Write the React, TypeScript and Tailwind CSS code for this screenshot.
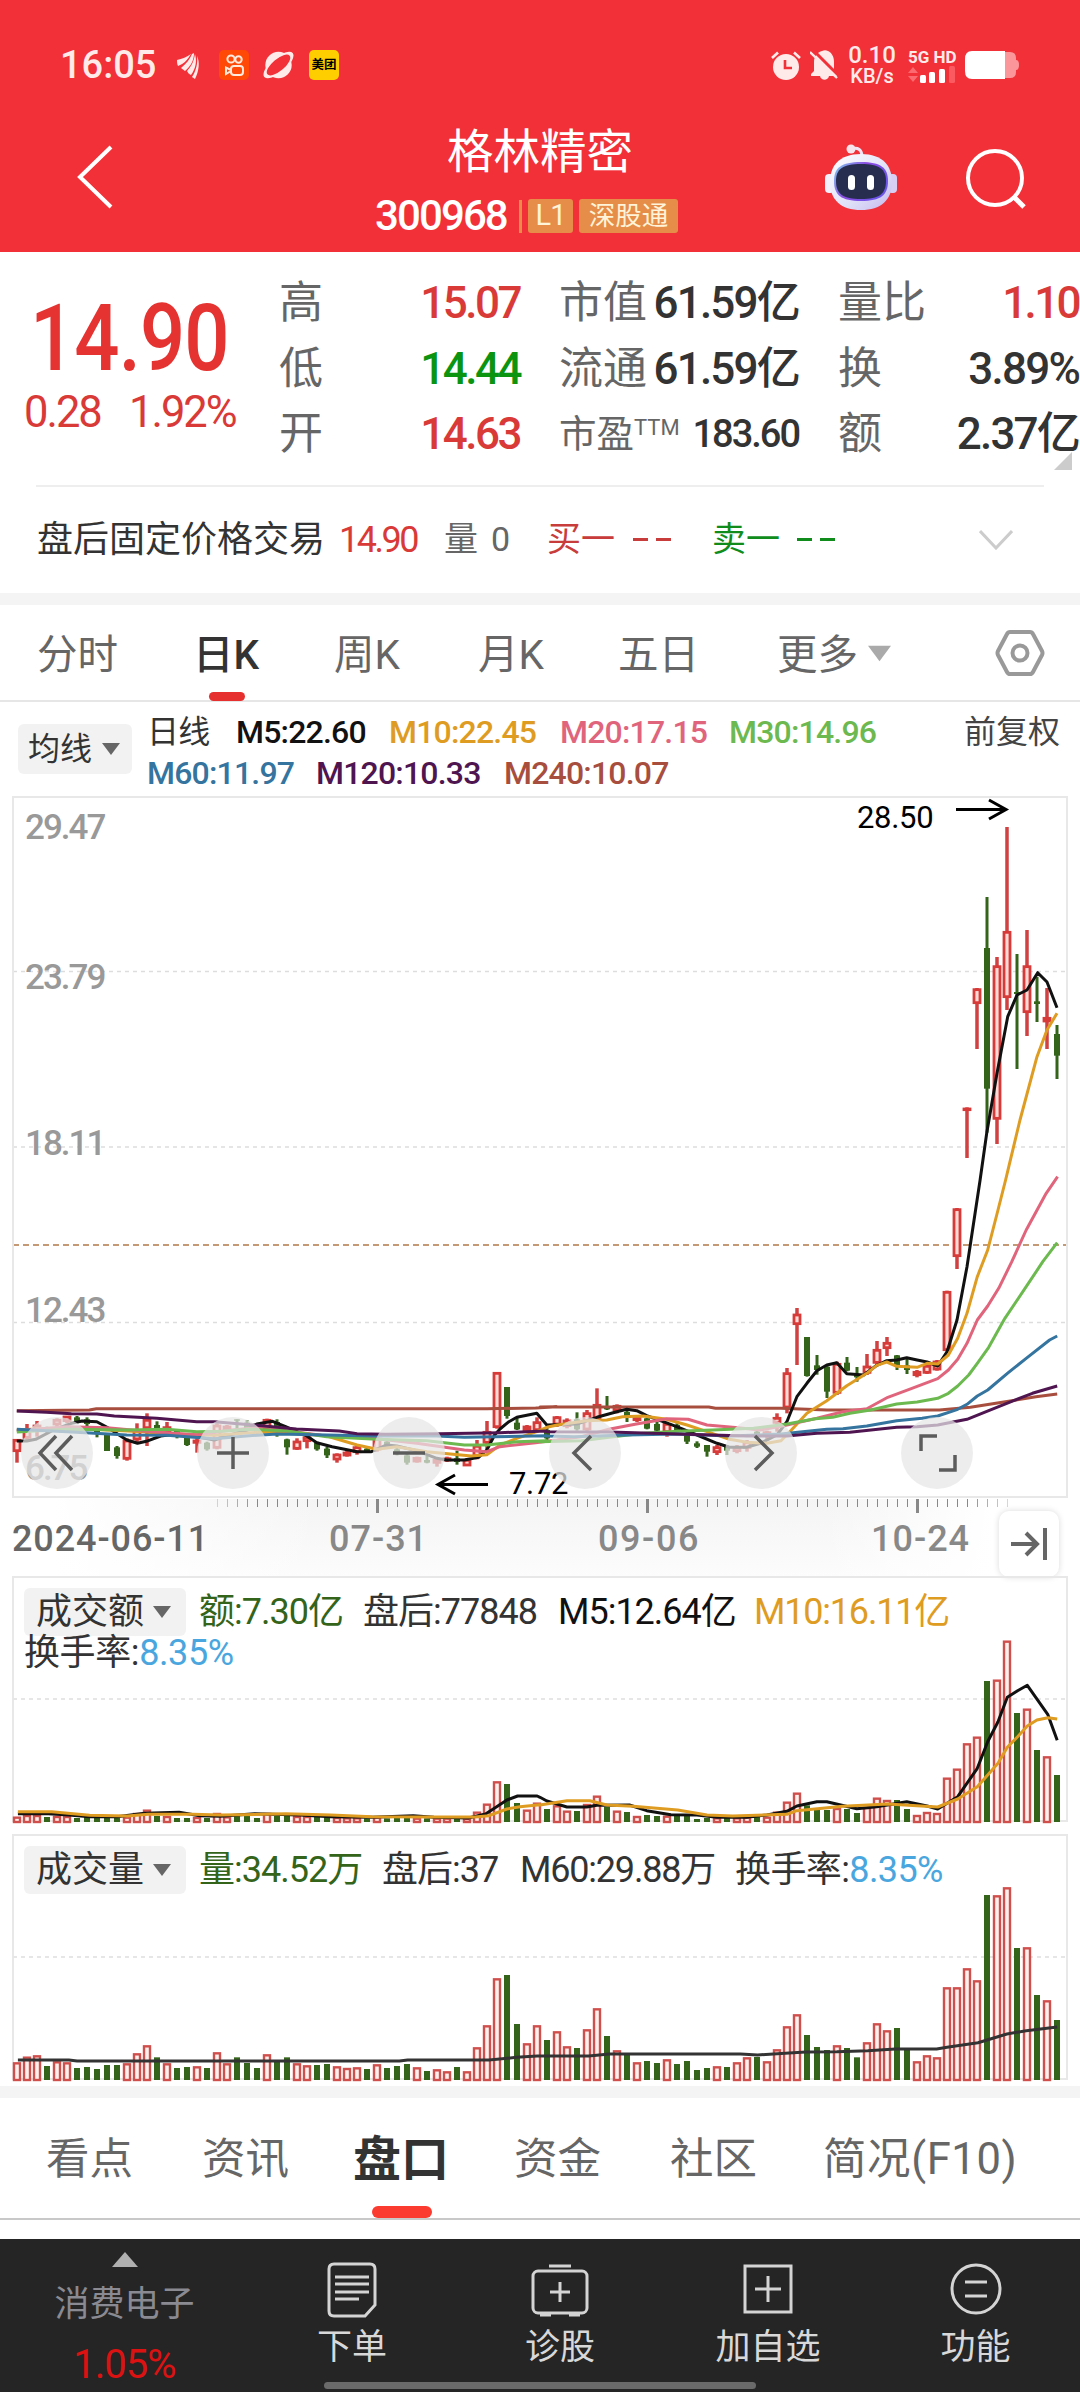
import React from "react";

type Section = { x: number; y: number; k: number };

// The curves are kept in sections of the plot, each with its own origin and scale
const LEFT: Section = { x: 0, y: 1330, k: 2.8 };
const RIGHT: Section = { x: 540, y: 1180, k: 2.904 };
const PEAK: Section = { x: 820, y: 780, k: 3 };
const TURN_L: Section = { x: 0, y: 1570, k: 2.904 };
const TURN_R: Section = { x: 540, y: 1570, k: 2.904 };
const VOL: Section = { x: 0, y: 1830, k: 1.452 };

const trace = (...parts: [Section, string][]) =>
  parts
    .flatMap(([s, pts]) =>
      pts.split(" ").map((p) => {
        const [x, y] = p.split(",").map(Number);
        return `${(s.x + x / s.k).toFixed(1)},${(s.y + y / 3).toFixed(1)}`;
      })
    )
    .join(" ");

const kLines = [
  {
    color: "#a84e3e",
    points: trace(
      [LEFT, "47,242 250,240 270,236 1363,236 1500,234 1559,230"],
      [RIGHT, "0,681 490,681 510,685 700,685 833,690 1160,690 1250,682 1370,662 1440,650 1502,642"]
    ),
  },
  {
    color: "#111111",
    points: trace(
      [LEFT, "47,333 75,333 100,328 150,300 200,280 230,273 271,275 300,292 355,330 385,340 410,334 450,318 495,312 551,320 600,330 635,318 691,300 719,282 763,274 800,290 859,318 887,338 930,350 1000,365 1040,365 1083,345 1111,348 1167,362 1223,385 1251,390 1300,390 1340,382 1363,360 1385,315 1400,297 1425,275 1447,262 1475,256 1503,250 1531,285"],
      [RIGHT, "22,735 107,732 165,712 223,695 252,688 281,692 310,707 397,740 456,765 514,790 550,802 600,802 640,790 688,765 717,725 746,650 775,610 804,572 833,555 862,548 891,581 940,585 978,556 1007,542 1036,540 1065,533 1095,540 1124,546 1155,558 1182,515 1211,420 1240,260 1278,0"],
      [PEAK, "500,1060 531,880 563,710 591,645 621,630 653,578 681,606 711,683"]
    ),
  },
  {
    color: "#df9c22",
    points: trace(
      [LEFT, "47,300 200,292 300,300 400,305 467,312 600,316 700,308 800,305 859,312 915,318 1000,345 1055,358 1111,350 1195,365 1320,378 1363,374 1400,345 1447,325 1503,305 1531,292"],
      [RIGHT, "20,742 50,735 136,722 194,720 240,710 300,708 368,718 427,735 485,755 550,778 601,787 659,790 700,782 730,750 775,700 833,662 891,617 949,580 978,556 1007,546 1036,559 1095,562 1124,550 1155,552 1186,525 1213,475 1240,400 1270,290 1300,210 1330,90 1352,0"],
      [PEAK, "570,1145 600,1020 651,830 681,750 711,700"]
    ),
  },
  {
    color: "#e0657c",
    points: trace(
      [LEFT, "47,302 187,290 300,293 400,303 467,308 551,314 650,300 747,290 800,302 900,316 1055,326 1167,340 1300,360 1363,365 1400,350 1500,338 1559,330"],
      [RIGHT, "60,778 120,770 200,748 280,732 368,716 430,718 485,735 560,742 640,750 717,735 804,715 880,695 949,686 1010,652 1080,625 1155,596 1186,570 1213,538 1240,490 1270,420 1300,378 1332,325 1370,245 1412,150 1470,40 1503,-10"]
    ),
  },
  {
    color: "#6cb94f",
    points: trace(
      [LEFT, "47,306 187,298 355,300 467,298 551,305 620,304 700,298 800,302 915,320 1055,328 1195,332 1300,345 1363,345 1447,335 1530,332"],
      [RIGHT, "0,785 120,782 200,772 300,760 400,754 500,750 620,745 717,732 800,716 850,712 900,700 960,690 1036,672 1095,666 1155,655 1186,640 1213,618 1245,585 1270,550 1303,502 1350,415 1412,320 1460,245 1502,188"]
    ),
  },
  {
    color: "#34749f",
    points: trace(
      [LEFT, "47,298 187,305 355,315 467,316 600,326 690,318 775,312 915,315 1055,318 1223,318 1300,322 1530,317"],
      [RIGHT, "20,768 100,770 250,765 400,762 550,768 700,762 833,748 880,746 949,738 1036,722 1110,715 1155,708 1213,688 1240,673 1270,648 1300,630 1360,578 1412,535 1480,480 1502,468"]
    ),
  },
  {
    color: "#4e1550",
    points: trace(
      [LEFT, "47,243 130,247 200,251 271,252 320,258 439,265 551,275 600,275 700,284 830,297 950,303 1000,311 1080,313 1230,311 1400,308 1530,303"],
      [RIGHT, "20,755 200,756 400,762 600,768 717,768 804,760 900,757 1036,742 1095,740 1155,735 1240,718 1303,692 1370,664 1430,640 1502,618"]
    ),
  },
];

const turnoverLines = [
  {
    color: "#111111",
    points: trace(
      [TURN_L, "52,731 140,731 200,735 260,740 340,740 420,730 520,727 580,737 640,739 740,731 870,735 960,740 1080,742 1200,737 1260,742 1360,744 1410,732 1440,712 1472,690 1503,678 1560,678"],
      [TURN_R, "0,682 20,693 78,711 136,711 165,706 260,705 310,722 380,734 456,735 514,742 600,742 659,735 717,724 746,708 804,695 833,695 920,716 978,710 1065,695 1124,708 1155,717 1213,680 1270,595 1300,515 1330,455 1357,382 1387,362 1415,346 1475,434 1502,511"]
    ),
  },
  {
    color: "#df9c22",
    points: trace(
      [TURN_L, "52,725 150,725 260,736 370,738 430,733 560,733 640,735 760,733 830,731 960,735 1080,740 1300,741 1380,741 1420,737 1472,717 1510,710 1568,704"],
      [TURN_R, "0,705 78,692 145,692 194,705 270,709 400,720 485,735 560,738 717,733 746,722 880,709 1010,702 1155,711 1213,687 1270,650 1300,615 1330,580 1357,532 1387,500 1415,468 1443,450 1475,443 1502,447"]
    ),
  },
];

const volumeLines = [
  {
    color: "#333333",
    points: trace([
      VOL,
      "26,690 100,690 112,693 580,693 592,690 710,690 750,682 780,678 855,678 885,672 1075,672 1100,675 1140,670 1170,666 1215,665 1260,662 1300,657 1360,657 1375,652 1420,638 1462,612 1490,602 1535,591",
    ]),
  },
];

// type, high, body top, body bottom, low
const candleData = (base: number, rows: string) =>
  rows.split(" ").map((row) => {
    const [high, top, bottom, low] = row
      .slice(1)
      .split(",")
      .map((v) => base + Number(v) / 3);
    return { up: row[0] === "r", high, top, bottom, low };
  });

const candles = [
  ...candleData(
    1330,
    "r328,328,365,398 r282,300,325,330 r273,285,300,320 g290,295,305,312 r265,268,285,295 r258,258,275,280 g258,262,275,280 g262,268,282,290 g298,302,310,322 g310,312,363,363 g348,352,378,386 r325,330,388,392 r280,300,330,340 r250,268,296,348 g274,285,300,310 r276,290,308,312 g300,302,318,325 g318,322,345,348 r325,330,340,368 g335,338,358,362 r280,285,355,358 r285,288,300,304 g268,268,272,300 g270,278,300,305 g290,295,308,312 r266,268,300,305 g268,276,310,320 g326,328,352,374 r325,333,358,360 r315,320,335,355 g335,338,358,362 g350,356,376,384 r370,372,390,398 r362,366,378,380 r346,350,368,374 g352,356,364,368 r320,325,360,365 g332,335,345,350 g350,358,372,376 g372,376,398,404 r380,382,396,398 g378,390,398,400 r385,388,400,410 r380,383,393,396 g362,385,396,404 r385,388,408,408 r330,346,380,388 r273,304,340,360 r127,127,293,296 g171,171,258,266 g262,278,298,300 r285,288,302,305 r262,275,302,305"
  ),
  ...candleData(
    1180,
    "g740,750,775,780 r708,710,735,740 r715,720,740,745 g697,718,748,752 r690,698,750,755 r625,673,718,722 g648,678,688,690 r673,676,692,700 g690,696,712,726 r708,711,722,726 g712,715,746,748 g725,732,752,754 r725,730,758,770 g730,735,752,755 g755,765,785,792 g784,790,800,804 g795,795,815,830 r795,800,818,825 g795,800,812,825 r795,800,815,820 r780,785,805,815 g752,755,765,770 r752,755,765,778 r700,712,730,755 r564,578,684,700 r384,402,434,555 g471,471,588,590 g525,556,570,584 g555,560,635,654 r545,550,640,645 g531,548,572,574 g561,583,592,605 r522,558,580,585 r483,508,550,556 r471,487,506,528 g525,526,555,570 g536,556,570,582 r570,574,587,592 r545,556,580,582 r540,543,570,572 r332,334,512,515 r84,86,230,267"
  ),
  ...candleData(
    780,
    "r982,984,992,1134 r624,626,671,807 g351,504,926,1058 r531,557,1018,1092 r141,454,653,690 g522,636,642,867 r450,557,698,768 g590,664,672,726 r624,712,726,807 g735,762,827,897"
  ),
];

const turnover =
  "r740 r735 r735 g741 r738 r738 g744 g741 g744 g741 g741 r740 r729 r719 g738 r738 g744 g744 r741 g744 r729 r739 g736 g738 g744 r729 g738 g736 r738 r738 g741 g741 r741 r742 r742 g745 r740 g745 g744 g744 r743 g745 r743 r743 g747 r744 r725 r701 r634 g642 g699 r719 r698 g717 r706 r722 g723 r702 r677 g711 r722 g726 r738 g735 g738 r737 g738 g738 g747 g744 r742 g742 r742 r740 g738 r740 r725 r695 r668 g706 g717 g720 r714 g717 g729 r711 r683 r690 g690 g717 r735 r726 r729 r623 r596 r520 r500 g333 r329 r212 g429 r416 g540 r559 g615";

const volume =
  "r697 r680 r676 g708 r694 r697 g714 g711 g717 g705 g705 r700 r670 r646 g682 r700 g714 g711 r709 g714 r667 r700 g682 g699 g714 r673 g692 g682 r700 r706 g705 g702 r709 r714 r712 g717 r703 g714 g708 g702 r712 g723 r718 r724 g711 r724 r652 r586 r445 g435 g582 r640 r586 g630 r604 r649 g654 r598 r535 g618 r661 g672 r697 g693 g699 r688 g702 g693 g720 g714 r709 g711 r697 r682 g681 r694 r658 r589 r553 g615 g651 g660 r646 g654 g682 r637 r580 r601 g594 g658 r694 r676 r682 r472 r472 r415 r451 g195 r196 r172 g354 r352 g495 r511 g570";

const barX = (i: number) => 17 + i * 10;

const Lines = ({ lines }: { lines: { color: string; points: string }[] }) => (
  <>
    {lines.map((line) => (
      <polyline
        key={line.color}
        points={line.points}
        fill="none"
        stroke={line.color}
        strokeWidth="3"
        strokeLinejoin="round"
      />
    ))}
  </>
);

const Bars = ({ data, origin, bottom }: { data: string; origin: number; bottom: number }) => (
  <>
    {data.split(" ").map((item, i) => {
      const top = origin + Number(item.slice(1)) / 3;
      return item[0] === "r" ? (
        <rect
          key={i}
          x={barX(i) - 3}
          y={top + 1}
          width="6"
          height={Math.max(bottom - top - 1, 1)}
          fill="#fff0ed"
          stroke="#cf4f4d"
          strokeWidth="2.4"
        />
      ) : (
        <rect key={i} x={barX(i) - 3} y={top} width="6" height={bottom - top} fill="#33641a" />
      );
    })}
  </>
);

const Caret = ({ className }: { className: string }) => (
  <svg viewBox="0 0 18 12" className={className}>
    <path d="M0 0H18L9 12Z" fill="currentColor" />
  </svg>
);

const StatusBar = () => (
  <div className="flex h-[86px] items-center pt-[44px] text-[#ffeaea]">
    <span className="ml-[60px] w-[116px] text-[38px] font-medium leading-[42px]">16:05</span>
    <svg viewBox="0 0 24 26" className="mt-0.5 h-[26px] w-[24px]" fill="currentColor">
      <path d="M1 7C6 6 11 4 15 1C12 6 8 11 2 13C1 11 1 9 1 7Z" />
      <path d="M5 15C10 11 14 6 16 1L18 0C18 7 15 13 9 18Z" />
      <path d="M11 18C16 13 18 7 19 1C21 8 20 15 15 22C13 21 12 20 11 18Z" />
      <path d="M21 3C24 9 23 18 19 26L16 24C20 18 22 10 21 3Z" />
    </svg>
    <svg viewBox="0 0 30 30" className="ml-[19px] h-[30px] w-[30px]">
      <rect width="30" height="30" rx="5" fill="#ff4906" />
      <g fill="none" stroke="#ffe9dd" strokeWidth="2">
        <circle cx="12" cy="9" r="3.6" />
        <circle cx="19.5" cy="9.5" r="3.2" />
        <rect x="12" y="16" width="12" height="9" rx="3" />
        <path d="M12 20L7 17.5V24L12 21" />
      </g>
    </svg>
    <svg viewBox="0 0 32 28" className="ml-[14px] h-[28px] w-[32px]">
      <g fill="currentColor">
        <circle cx="15.5" cy="14" r="13.2" />
        <ellipse cx="15.5" cy="14" rx="18.5" ry="7.5" transform="rotate(-40 15.5 14)" />
      </g>
      <ellipse cx="15.5" cy="14" rx="14.5" ry="6" transform="rotate(-40 15.5 14)" fill="#f13038" />
    </svg>
    <span className="ml-[14px] flex h-[30px] w-[30px] items-center justify-center rounded-[5px] bg-[#ffce00] text-[12.5px] font-bold text-black">
      美团
    </span>
    <svg viewBox="0 0 30 30" className="ml-[432px] h-[30px] w-[30px]" fill="currentColor">
      <circle cx="15" cy="17" r="13" />
      <path d="M14 10V18H21" fill="none" stroke="#f13038" strokeWidth="2.6" />
      <path d="M1 8L7 2.5M29 8L23 2.5" stroke="currentColor" strokeWidth="2.6" />
    </svg>
    <svg viewBox="0 0 28 30" className="ml-[9px] h-[30px] w-[28px]" fill="currentColor">
      <path d="M1 26V24L4 21V12C4 6 8 2 12 1C14 0 16 0 18 1C22 3 24 7 24 12V20L27 24V26H19C18 31 11 31 10 26Z" />
      <path d="M1 -2L30 27" stroke="#f13038" strokeWidth="3" />
      <path d="M0 2L27 28" stroke="currentColor" strokeWidth="2.4" />
    </svg>
    <div className="ml-[10px] w-[48px] text-center font-medium">
      <div className="text-[24px] leading-[21px]">0.10</div>
      <div className="text-[20px] leading-[20px]">KB/s</div>
    </div>
    <div className="ml-[12px] w-[50px]">
      <div className="whitespace-nowrap text-[17px] font-bold leading-[18px]">5G HD</div>
      <svg viewBox="0 0 48 17" className="h-[17px] w-[48px]">
        <path d="M5 1L10 7H0ZM5 16L10 10H0Z" fill="#fb6a70" />
        <g fill="#ffffff">
          <rect x="12" y="9" width="6" height="8" rx="1.5" />
          <rect x="21" y="6" width="6" height="11" rx="1.5" />
          <rect x="31" y="3" width="6" height="14" rx="1.5" />
          <rect x="41" y="0" width="6" height="17" rx="1.5" fill="#fb5a60" />
        </g>
      </svg>
    </div>
    <svg viewBox="0 0 54 28" className="ml-[7px] h-[28px] w-[54px]">
      <path d="M39 1H45Q51 1 51 7V9Q54 9 54 14Q54 19 51 19V21Q51 27 45 27H39Z" fill="#fb979b" />
      <path d="M7 0H40V28H7Q0 28 0 20V8Q0 0 7 0Z" fill="#ffffff" />
    </svg>
  </div>
);

const Robot = () => (
  <svg viewBox="0 0 72 68" className="h-[68px] w-[72px]">
    <defs>
      <linearGradient id="shell" x1="0" y1="0" x2="1" y2="1">
        <stop offset="0" stopColor="#ffffff" />
        <stop offset="0.6" stopColor="#dfe0f8" />
        <stop offset="1" stopColor="#c5b8ee" />
      </linearGradient>
      <linearGradient id="visor" x1="0" y1="0" x2="1" y2="0.5">
        <stop offset="0" stopColor="#7fd0f0" />
        <stop offset="0.5" stopColor="#8a4ae0" />
        <stop offset="1" stopColor="#6d55e8" />
      </linearGradient>
    </defs>
    <path d="M26 5Q37 2 37 13" fill="none" stroke="#efe4f6" strokeWidth="3" />
    <circle cx="26" cy="5" r="4.5" fill="#f6e3ec" />
    <rect x="0" y="30" width="9" height="19" rx="4" fill="#f1f0fb" />
    <rect x="63" y="30" width="9" height="19" rx="4" fill="#d8d0f4" />
    <path d="M36 10C58 10 67 22 67 38C67 56 56 66 36 66C16 66 5 56 5 38C5 22 14 10 36 10Z" fill="url(#shell)" />
    <path d="M36 18C56 18 63 24 63 37C63 51 56 57 36 57C16 57 9 51 9 37C9 24 16 18 36 18Z" fill="url(#visor)" />
    <path d="M36 20C54 20 61 25 61 37C61 50 54 55 36 55C18 55 11 50 11 37C11 25 18 20 36 20Z" fill="#272d4f" />
    <rect x="23" y="31" width="7" height="15" rx="3.5" fill="#ffffff" />
    <rect x="42" y="31" width="7" height="15" rx="3.5" fill="#ffffff" />
  </svg>
);

const Header = () => (
  <header className="h-[252px] bg-[#f13038] text-white">
    <StatusBar />
    <div className="flex h-[166px] items-start">
      <svg viewBox="0 0 36 64" className="ml-[77px] mt-[59px] h-[64px] w-[36px]">
        <path d="M34 2L3 32L34 62" fill="none" stroke="#ffffff" strokeWidth="4" />
      </svg>
      <div className="ml-[215px] mt-[34px] w-[424px]">
        <h1 className="text-center text-[46.5px] leading-[64px]">格林精密</h1>
        <div className="mt-[13px] flex h-[38px] items-center pl-[47px]">
          <span className="w-[144px] text-[42px] font-medium leading-[38px] tracking-[-1.9px]">300968</span>
          <span className="mr-[6px] h-[33px] w-[3px] bg-[#e58d49]" />
          <span className="mr-[6px] flex h-[34px] w-[45px] items-center justify-center rounded-[3px] bg-[#e58d49] text-[29px] tracking-[-1px] text-[#fff3d8]">
            L1
          </span>
          <span className="flex h-[34px] w-[99px] items-center justify-center rounded-[3px] bg-[#e58d49] text-[26.5px] text-[#fff3d8]">
            深股通
          </span>
        </div>
      </div>
      <div className="ml-[73px] mt-[58px]">
        <Robot />
      </div>
      <svg viewBox="0 0 62 62" className="ml-[67px] mt-[61px] h-[62px] w-[62px]">
        <circle cx="31" cy="31" r="27" fill="none" stroke="#ffffff" strokeWidth="4" />
        <path d="M49 49L60 60" stroke="#ffffff" strokeWidth="5" />
      </svg>
    </div>
  </header>
);

const Quote = () => (
  <section className="relative h-[233px] text-[44px] leading-[65.5px] text-[#666666]">
    <div className="flex pt-[19px]">
      <div className="w-[279px] shrink-0 pt-[18px] text-[#e43331]">
        <div className="ml-[30px] origin-left scale-x-[0.865] text-[92px] font-medium leading-[100px] tracking-[-1px]">
          14.90
        </div>
        <div className="mt-[-9px] flex pl-[24px] text-[43.5px] leading-[65px] tracking-[-2px] text-[#d93a38]">
          <span className="w-[105px]">0.28</span>
          <span>1.92%</span>
        </div>
      </div>
      <div className="w-[280px] shrink-0">
        <div className="flex w-[241px] justify-between">
          高<span className="font-medium tracking-[-2.5px] text-[#d93a38]">15.07</span>
        </div>
        <div className="flex w-[241px] justify-between">
          低<span className="font-medium tracking-[-2.5px] text-[#0a9410]">14.44</span>
        </div>
        <div className="flex w-[241px] justify-between">
          开<span className="font-medium tracking-[-2.5px] text-[#d93a38]">14.63</span>
        </div>
      </div>
      <div className="w-[279px] shrink-0">
        <div className="flex w-[240px] justify-between">
          市值<span className="font-medium tracking-[-1.8px] text-[#333333]">61.59亿</span>
        </div>
        <div className="flex w-[240px] justify-between">
          流通<span className="font-medium tracking-[-1.8px] text-[#333333]">61.59亿</span>
        </div>
        <div className="flex w-[240px] justify-between">
          <span className="flex text-[37.5px]">
            市盈<span className="relative top-[-7px] text-[22px]">TTM</span>
          </span>
          <span className="text-[38px] font-medium tracking-[-2px] text-[#333333]">183.60</span>
        </div>
      </div>
      <div className="w-[241px] shrink-0">
        <div className="flex justify-between">
          量比<span className="font-medium tracking-[-2.6px] text-[#d93a38]">1.10</span>
        </div>
        <div className="flex justify-between">
          换<span className="font-medium tracking-[-1.8px] text-[#333333]">3.89%</span>
        </div>
        <div className="flex justify-between">
          额<span className="font-medium tracking-[-1.8px] text-[#333333]">2.37亿</span>
        </div>
      </div>
    </div>
    <svg viewBox="0 0 18 18" className="absolute right-[8px] top-[200px] h-[18px] w-[18px]">
      <path d="M18 0V18H0Z" fill="#cccccc" />
    </svg>
  </section>
);

const Dashes = ({ className }: { className: string }) => (
  <span className={className}>
    <i className="h-[3.5px] w-[15px] bg-current" />
    <i className="h-[3.5px] w-[15px] bg-current" />
  </span>
);

const AfterHours = () => (
  <section className="h-[108px]">
    <div className="mx-[36px] h-[2px] bg-[#eeeeee]" />
    <div className="flex h-[106px] items-center pb-[1px] text-[34px]">
      <span className="w-[339px] shrink-0 whitespace-nowrap pl-[37px] text-[36px] text-[#333333]">
        盘后固定价格交易
      </span>
      <span className="w-[105px] text-[36px] tracking-[-2.5px] text-[#d93a38]">14.90</span>
      <span className="w-[47px] text-[#666666]">量</span>
      <span className="w-[56px] text-[#666666]">0</span>
      <span className="w-[86px] text-[#c93c3c]">买一</span>
      <Dashes className="flex w-[79px] gap-[8px] text-[#c93c3c]" />
      <span className="w-[85px] text-[#0f8c1c]">卖一</span>
      <Dashes className="flex w-[182px] gap-[8px] text-[#0f8c1c]" />
      <svg viewBox="0 0 34 20" className="h-[20px] w-[34px]">
        <path d="M1 1L17 18L33 1" fill="none" stroke="#cccccc" strokeWidth="3" />
      </svg>
    </div>
  </section>
);

const PeriodTabs = () => (
  <nav className="flex h-[97px] items-start border-b-2 border-[#e6e6e6] text-[40.5px] leading-[100px] text-[#666666]">
    <span className="ml-[37px] w-[156px]">分时</span>
    <span className="relative w-[141px] font-medium text-[#333333]">
      日K
      <i className="absolute left-[16px] top-[87px] h-[9px] w-[36px] rounded-full bg-[#e5302f]" />
    </span>
    <span className="w-[144px]">周K</span>
    <span className="w-[140px]">月K</span>
    <span className="w-[159px]">五日</span>
    <span className="w-[91px]">更多</span>
    <Caret className="mt-[39px] h-[19px] w-[23px] text-[#aaaaaa]" />
    <svg viewBox="0 0 50 48" className="ml-[104px] mt-[24px] h-[48px] w-[50px]" fill="none" stroke="#999999" strokeWidth="4">
      <path d="M15 3H35Q37 3 38 5L47 22Q48 24 47 26L38 43Q37 45 35 45H15Q13 45 12 43L3 26Q2 24 3 22L12 5Q13 3 15 3Z" />
      <circle cx="25" cy="24" r="7.5" />
    </svg>
  </nav>
);

const Averages = () => (
  <div className="flex h-[93px] text-[32px] leading-[41px]">
    <div className="ml-[18px] mt-[22px] flex h-[50px] w-[114px] items-center rounded-[6px] bg-[#f2f2f2] pl-[10px] text-[#333333]">
      均线
      <Caret className="ml-[10px] h-[12px] w-[18px] text-[#666666]" />
    </div>
    <div className="ml-[15px] mt-[10px] w-[817px] whitespace-nowrap">
      <div className="flex font-medium tracking-[-0.8px]">
        <span className="w-[89px] font-normal text-[#333333]">日线</span>
        <span className="w-[153px] text-[#111111]">M5:22.60</span>
        <span className="w-[171px] text-[#df9c22]">M10:22.45</span>
        <span className="w-[169px] text-[#e0657c]">M20:17.15</span>
        <span className="text-[#6cb94f]">M30:14.96</span>
      </div>
      <div className="flex font-medium tracking-[-0.8px]">
        <span className="w-[169px] text-[#34749f]">M60:11.97</span>
        <span className="w-[188px] text-[#4e1550]">M120:10.33</span>
        <span className="text-[#a84e3e]">M240:10.07</span>
      </div>
    </div>
    <span className="mt-[10px] text-[#444444]">前复权</span>
  </div>
);

const toolButtons = [
  { x: 57, d: "M-1 -17L-17 0L-1 17M15 -17L-1 0L15 17" },
  { x: 233, d: "M-16 0H16M0 -16V16" },
  { x: 409, d: "M-16 0H16" },
  { x: 585, d: "M6 -17L-11 0L6 17" },
  { x: 761, d: "M-6 -17L11 0L-6 17" },
  { x: 937, d: "M0 -17H-16V-2M2 17H18V2" },
];

const KChart = () => (
  <svg viewBox="0 795 1080 704" className="block h-[704px] w-full font-['Roboto',sans-serif]">
    <g stroke="#dddddd" strokeWidth="1.5" strokeDasharray="4 4">
      <path d="M13 971.5H1067M13 1147H1067M13 1322.5H1067" />
    </g>
    <path d="M13 1245H1067" stroke="#c49a76" strokeWidth="2" strokeDasharray="6 4" />
    <rect x="13" y="797" width="1054" height="700" fill="none" stroke="#e8e8e8" strokeWidth="2" />
    <g fill="#999999" fontSize="35" fontWeight="500" letterSpacing="-2">
      <text x="25" y="839">29.47</text>
      <text x="25" y="989">23.79</text>
      <text x="25" y="1155">18.11</text>
      <text x="25" y="1322">12.43</text>
      <text x="25" y="1480">6.75</text>
    </g>
    {candles.map((c, i) => {
      const x = barX(i);
      if (!c.up) {
        return (
          <g key={i} fill="#33641a">
            <rect x={x - 1.5} y={c.high} width="3" height={c.low - c.high} />
            <rect x={x - 3} y={c.top} width="6" height={c.bottom - c.top} />
          </g>
        );
      }
      return (
        <g key={i}>
          <rect x={x - 1.75} y={c.high} width="3.5" height={c.low - c.high} fill="#cf4241" />
          <rect
            x={x - 3}
            y={c.top + 1}
            width="6"
            height={Math.max(c.bottom - c.top - 2, 0.5)}
            fill="#ffd9d5"
            stroke="#d63a39"
            strokeWidth="2.8"
          />
        </g>
      );
    })}
    <Lines lines={kLines} />
    <g fill="#000000" fontSize="31" letterSpacing="-0.3">
      <text x="857" y="828">28.50</text>
      <text x="509" y="1494">7.72</text>
    </g>
    <g fill="none" stroke="#000000" strokeWidth="3">
      <path d="M956 809.5H1006M989 800L1006 809.5L989 819" />
      <path d="M488 1484.5H438M455 1475L438 1484.5L455 1494" />
    </g>
    {toolButtons.map((b) => (
      <g key={b.x} transform={`translate(${b.x} 1453)`}>
        <circle r="36" fill="#e6e6e6" fillOpacity="0.72" />
        <path d={b.d} fill="none" stroke="#5c5c5c" strokeWidth="3.5" />
      </g>
    ))}
  </svg>
);

const ticks = Array.from({ length: 80 }, (_, i) => i + 20);

const TimeAxis = () => (
  <div className="relative h-[77px] bg-linear-to-b from-[#f4f4f4] to-[#fcfcfc] text-[36px]">
    <div className="absolute inset-0 bg-linear-to-r from-white from-5% via-transparent via-30% to-transparent" />
    <div className="absolute inset-0 bg-linear-to-l from-white from-8% via-transparent via-24% to-transparent" />
    <svg viewBox="0 1499 1080 16" className="absolute left-0 top-0 h-[16px] w-full">
      {ticks.map((i) =>
        (i - 36) % 27 === 0 ? (
          <rect key={i} x={barX(i) - 1} y="1499" width="3" height="14" fill="#888888" />
        ) : (
          <rect
            key={i}
            x={barX(i)}
            y="1499"
            width="1"
            height="8"
            fill="#888888"
            opacity={Math.min(1, (i - 18) / 6, (101 - i) / 6)}
          />
        )
      )}
    </svg>
    <div className="relative flex h-full items-center font-medium text-[#888888]">
      <span className="w-[329px] pl-[12px] pt-[3px] tracking-[0.9px] text-[#666666]">2024-06-11</span>
      <span className="w-[269px] pt-[3px] tracking-[1px]">07-31</span>
      <span className="w-[273px] pt-[3px] tracking-[1.6px]">09-06</span>
      <span className="w-[128px] pt-[3px] tracking-[1px]">10-24</span>
      <span className="mt-[12px] flex h-[66px] w-[60px] items-center justify-center rounded-[10px] bg-white shadow-[0_0_6px_rgba(0,0,0,0.15)]">
        <svg viewBox="0 0 36 34" className="h-[34px] w-[36px]" fill="none" stroke="#666666" strokeWidth="4">
          <path d="M0 17H26M15 6L26 17L15 28M34 1V33" />
        </svg>
      </span>
    </div>
  </div>
);

const IndicatorButton = ({ label }: { label: string }) => (
  <div className="mr-[13px] flex h-[48px] w-[162px] shrink-0 items-center rounded-[6px] bg-[#f2f2f2] pl-[12px] text-[36px] tracking-normal text-[#333333]">
    {label}
    <Caret className="ml-[9px] h-[12px] w-[18px] text-[#666666]" />
  </div>
);

const Turnover = () => (
  <section className="relative h-[258px]">
    <svg viewBox="0 1576 1080 258" className="absolute inset-0 h-full w-full">
      <rect x="13" y="1577" width="1054" height="244" fill="none" stroke="#e8e8e8" strokeWidth="2" />
      <path d="M13 1699H1067" stroke="#e6e6e6" strokeWidth="2" strokeDasharray="4 4" />
      <Bars data={turnover} origin={1570} bottom={1822} />
      <Lines lines={turnoverLines} />
    </svg>
    <div className="relative pl-[24px] pt-[12px] text-[36px] leading-[40px] tracking-[-1px]">
      <div className="flex h-[48px] items-center whitespace-nowrap">
        <IndicatorButton label="成交额" />
        <span className="w-[164px] text-[#33641a]">额:7.30亿</span>
        <span className="w-[195px] text-[#333333]">盘后:77848</span>
        <span className="w-[196px] text-[#111111]">M5:12.64亿</span>
        <span className="tracking-[-1.2px] text-[#df9c22]">M10:16.11亿</span>
      </div>
      <div className="mt-[-3px] tracking-[-0.4px] text-[#333333]">
        换手率:<span className="text-[#4aa6de]">8.35%</span>
      </div>
    </div>
  </section>
);

const Volume = () => (
  <section className="relative h-[252px]">
    <svg viewBox="0 1834 1080 252" className="absolute inset-0 h-full w-full">
      <rect x="13" y="1835" width="1054" height="244" fill="none" stroke="#e8e8e8" strokeWidth="2" />
      <path d="M13 1957H1067" stroke="#e6e6e6" strokeWidth="2" strokeDasharray="4 4" />
      <Bars data={volume} origin={1830} bottom={2080} />
      <Lines lines={volumeLines} />
    </svg>
    <div className="relative flex h-[72px] items-center whitespace-nowrap pl-[24px] text-[36px] tracking-[-1px] text-[#333333]">
      <IndicatorButton label="成交量" />
      <span className="w-[183px] text-[#33641a]">量:34.52万</span>
      <span className="w-[138px]">盘后:37</span>
      <span className="w-[215px] tracking-[-1.2px]">M60:29.88万</span>
      <span className="tracking-[-0.6px]">
        换手率:<span className="text-[#4aa6de]">8.35%</span>
      </span>
    </div>
  </section>
);

const InfoTabs = () => (
  <nav className="flex h-[122px] items-center whitespace-nowrap border-b-2 border-[#c8c8c8] pt-[3px] text-[43.5px] text-[#666666]">
    <span className="ml-[46px] w-[156px]">看点</span>
    <span className="w-[151px]">资讯</span>
    <span className="relative w-[161px] text-[48px] font-bold text-[#333333]">
      盘口
      <i className="absolute bottom-[-22px] left-[19px] h-[12px] w-[60px] rounded-full bg-[#fb3a30]" />
    </span>
    <span className="w-[156px]">资金</span>
    <span className="w-[153px]">社区</span>
    <span className="tracking-[0.6px]">简况(F10)</span>
  </nav>
);

const BottomBar = () => (
  <footer className="relative mt-[19px] flex h-[153px] bg-[#252525] text-[35px] leading-[40px] text-[#d8d8d8]">
    <div className="flex w-[249px] flex-col items-center pt-[13px]">
      <svg viewBox="0 0 26 15" className="h-[15px] w-[26px]">
        <path d="M13 0L26 15H0Z" fill="#b0b0b0" />
      </svg>
      <span className="mt-[18px] text-[#8a8a92]">消费电子</span>
      <span className="mt-[20px] text-[40px] tracking-[-1px] text-[#dc1212]">1.05%</span>
    </div>
    <div className="flex w-[206px] flex-col items-center pt-[22px]">
      <svg viewBox="0 0 52 58" className="h-[58px] w-[52px]" fill="none" stroke="#d4d4d4" strokeWidth="3">
        <path d="M8 3H44Q49 3 49 8V44L39 55H8Q3 55 3 50V8Q3 3 8 3Z" />
        <path d="M9 16H43M9 23H43M9 31H43M9 38H33" />
      </svg>
      <span className="mt-[9px]">下单</span>
    </div>
    <div className="flex w-[210px] flex-col items-center pt-[22px]">
      <svg viewBox="0 0 60 58" className="h-[58px] w-[60px]" fill="none" stroke="#d4d4d4" strokeWidth="3">
        <path d="M19 5H41" />
        <rect x="3" y="10" width="54" height="42" rx="5" />
        <path d="M20 31H40M30 21V41M10 54H21M39 54H50" />
      </svg>
      <span className="mt-[9px]">诊股</span>
    </div>
    <div className="flex w-[206px] flex-col items-center pt-[22px]">
      <svg viewBox="0 0 52 58" className="h-[58px] w-[52px]" fill="none" stroke="#d4d4d4" strokeWidth="3">
        <rect x="3" y="5" width="46" height="46" />
        <path d="M13 28H39M26 15V41" />
      </svg>
      <span className="mt-[9px]">加自选</span>
    </div>
    <div className="flex w-[209px] flex-col items-center pt-[22px]">
      <svg viewBox="0 0 54 58" className="h-[58px] w-[54px]" fill="none" stroke="#d4d4d4" strokeWidth="3">
        <circle cx="27" cy="28" r="24" />
        <path d="M16 21H38M16 35H38" />
      </svg>
      <span className="mt-[9px]">功能</span>
    </div>
    <i className="absolute bottom-[3px] left-[324px] h-[7px] w-[432px] rounded-full bg-[#6a6a6a]" />
  </footer>
);

const App = () => {
  return (
    <div className="h-[2392px] w-[1080px] overflow-hidden bg-white font-['Roboto','Noto_Sans_CJK_SC',sans-serif]">
      <Header />
      <Quote />
      <AfterHours />
      <div className="h-[12px] bg-[#f4f4f4]" />
      <PeriodTabs />
      <Averages />
      <KChart />
      <TimeAxis />
      <Turnover />
      <Volume />
      <div className="h-[12px] bg-[#f4f4f4]" />
      <InfoTabs />
      <BottomBar />
    </div>
  );
};

export default App;
